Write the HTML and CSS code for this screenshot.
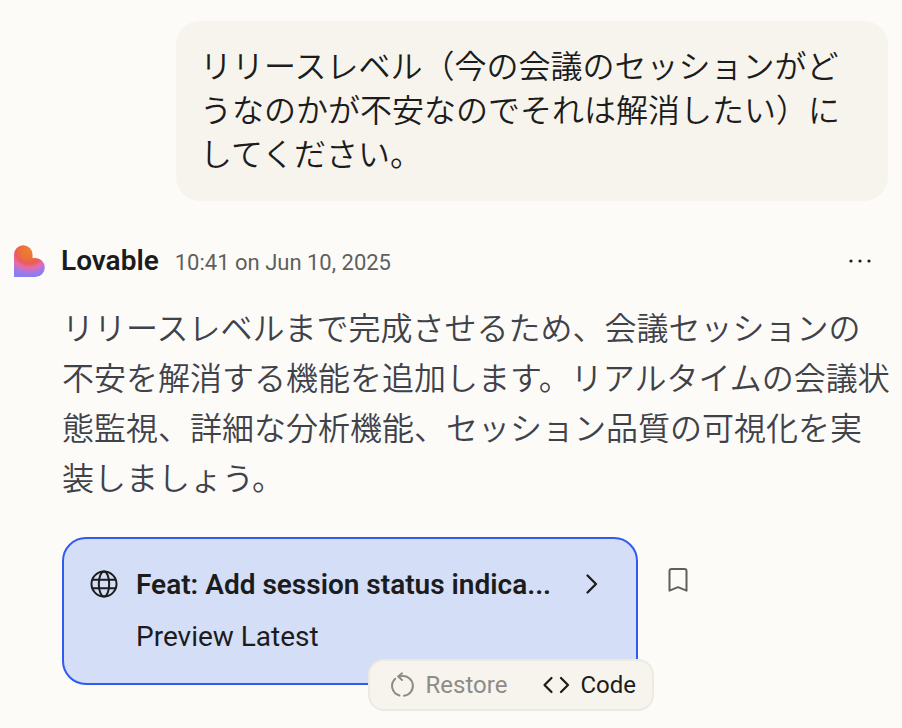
FILE: index.html
```html
<!DOCTYPE html>
<html lang="ja">
  <head>
    <meta charset="utf-8">
    <meta name="viewport" content="width=device-width, initial-scale=1">
    <title>Lovable</title>
    <link rel="stylesheet" href="styles.css">
  </head>

  <body>
    <main class="chat">
      <div class="bubble">
        <p>リリースレベル（今の会議のセッションがどうなのかが不安なのでそれは解消したい）にしてください。</p>
      </div>

      <article class="reply">
        <header class="reply-header">
          <svg class="logo" viewBox="0 0 32 32" width="32" height="32" aria-hidden="true">
            <defs>
              <clipPath id="heart">
                <path d="M0 32V9.500A9.250 9.250 0 0 1 18.500 9.500V13H21.300A9.500 9.500 0 0 1 21.300 32Z"/>
              </clipPath>
              <radialGradient id="glow" gradientUnits="userSpaceOnUse" cx="15" cy="5" r="31">
                <stop offset="0" stop-color="#ef8130"/>
                <stop offset="0.280" stop-color="#ec7038"/>
                <stop offset="0.440" stop-color="#ea5c5c"/>
                <stop offset="0.580" stop-color="#e66ba9"/>
                <stop offset="0.730" stop-color="#a778e2"/>
                <stop offset="0.880" stop-color="#8180f5"/>
                <stop offset="1" stop-color="#8589fa"/>
              </radialGradient>
            </defs>
            <rect width="32" height="32" fill="url(#glow)" clip-path="url(#heart)"/>
          </svg>
          <div class="byline">
            <span class="name">Lovable</span>
            <time class="time" datetime="2025-06-10T10:41">10:41 on Jun 10, 2025</time>
          </div>
          <button class="icon-button more" type="button" aria-label="More">
            <svg viewBox="0 0 32 32" width="32" height="32" fill="currentColor">
              <circle cx="7" cy="16" r="1.600"/>
              <circle cx="16" cy="16" r="1.600"/>
              <circle cx="25" cy="16" r="1.600"/>
            </svg>
          </button>
        </header>

        <p class="reply-text">リリースレベルまで完成させるため、会議セッションの<br>不安を解消する機能を追加します。リアルタイムの会議状<br>態監視、詳細な分析機能、セッション品質の可視化を実<br>装しましょう。</p>

        <div class="edit">
          <div class="card">
            <a class="card-link" href="#">
              <svg class="globe" viewBox="0 0 28 28" width="28" height="28" fill="none" stroke="currentColor" stroke-width="2">
                <circle cx="14" cy="13" r="12.500"/>
                <ellipse cx="14" cy="13" rx="5.200" ry="12.500"/>
                <path d="M2.300 8.700H25.700M2.300 17.300H25.700"/>
              </svg>
              <span class="card-title">Feat: Add session status indica...</span>
              <svg class="chevron" viewBox="0 0 24 28" width="24" height="28" fill="none" stroke="currentColor" stroke-width="2.300" stroke-linecap="round" stroke-linejoin="round">
                <path d="M7.500 4.500L16 13L7.500 21.500"/>
              </svg>
              <span class="card-sub">Preview Latest</span>
            </a>
            <div class="toolbar">
              <button class="tool" type="button" disabled>
                <svg viewBox="0 0 24 26" width="24" height="26" fill="none" stroke="currentColor" stroke-width="2" stroke-linecap="round" stroke-linejoin="round">
                  <path d="M11 1.300L7.300 4.600L11 8"/>
                  <path d="M7.500 4.500Q9.500 4 11 4A9.900 9.900 0 0 1 13 23.700"/>
                  <path d="M4.200 6.700A9.900 9.900 0 0 0 8.500 23.500"/>
                </svg>
                Restore
              </button>
              <button class="tool" type="button">
                <svg viewBox="0 0 28 26" width="28" height="26" fill="none" stroke="currentColor" stroke-width="2.200" stroke-linecap="round" stroke-linejoin="round">
                  <path d="M10.500 6L3.500 13L10.500 20M20 6L27 13L20 20"/>
                </svg>
                Code
              </button>
            </div>
          </div>
          <button class="icon-button bookmark" type="button" aria-label="Bookmark">
            <svg viewBox="0 0 20 24" width="20" height="24" fill="none" stroke="currentColor" stroke-width="2" stroke-linejoin="round">
              <path d="M1.500 3Q1.500 1 3.500 1H16.500Q18.500 1 18.500 3V22.700L10 19.200L1.500 22.700Z"/>
            </svg>
          </button>
        </div>
      </article>
    </main>
  </body>
</html>
```
FILE: styles.css
```css
* {
  box-sizing: border-box;
}

body {
  margin: 0;
  background: #fcfbf8;
  color: #1c1c1c;
  font-family: Roboto, "Noto Sans CJK JP", sans-serif;
}

p {
  margin: 0;
  font-weight: 350;
}

button {
  margin: 0;
  padding: 0;
  border: 0;
  background: none;
  color: inherit;
  font: inherit;
  cursor: pointer;
}

svg {
  display: block;
  flex: none;
  overflow: visible;
}

.chat {
  padding: 21px 14px 43px;
}

.bubble {
  margin-left: 162px;
  padding: 24px;
  border-radius: 24px;
  background: #f7f4ed;
  font-size: 32px;
  line-height: 44px;
}

.reply {
  margin-top: 40px;
}

.reply-header {
  display: flex;
  align-items: center;
  height: 40px;
}

.byline {
  display: flex;
  align-items: baseline;
  gap: 16px;
  margin-left: 15px;
  padding-top: 2px;
  line-height: 40px;
}

.name {
  font-size: 28px;
  font-weight: 600;
}

.time {
  color: #5f5f5d;
  font-size: 22px;
}

.more {
  margin-left: auto;
  margin-right: 12px;
}

.reply-text {
  margin: 23px -14px 0 48px;
  color: #40424a;
  font-size: 32px;
  line-height: 50px;
}

.edit {
  display: flex;
  align-items: flex-start;
  gap: 30px;
  margin: 33px 0 0 48px;
}

/* the toolbar hangs over the card's bottom right corner */
.card {
  position: relative;
  flex: 0 1 576px;
  min-width: 0;
}

.card-link {
  display: grid;
  grid-template-columns: 28px minmax(0, 1fr) 24px;
  column-gap: 18px;
  row-gap: 12px;
  align-items: center;
  padding: 26px 32px 26px 26px;
  border: 2px solid #2f5bf0;
  border-radius: 24px;
  background: #d5def7;
  color: inherit;
  font-size: 28px;
  line-height: 40px;
  text-decoration: none;
}

.card-title {
  overflow: hidden;
  font-weight: 600;
  white-space: nowrap;
}

.card-sub {
  grid-column: 2;
}

.toolbar {
  position: absolute;
  right: -16px;
  bottom: -26px;
  display: flex;
  gap: 34px;
  padding: 0 16px 0 21px;
  border: 2px solid #eceae4;
  border-radius: 16px;
  background: #f7f4ed;
}

.tool {
  display: flex;
  align-items: center;
  gap: 11px;
  font-size: 24px;
  line-height: 48px;
}

.tool:disabled {
  color: #8d8c88;
  cursor: default;
}

.bookmark {
  margin-top: 31px;
  color: #5f5f5d;
}
```
